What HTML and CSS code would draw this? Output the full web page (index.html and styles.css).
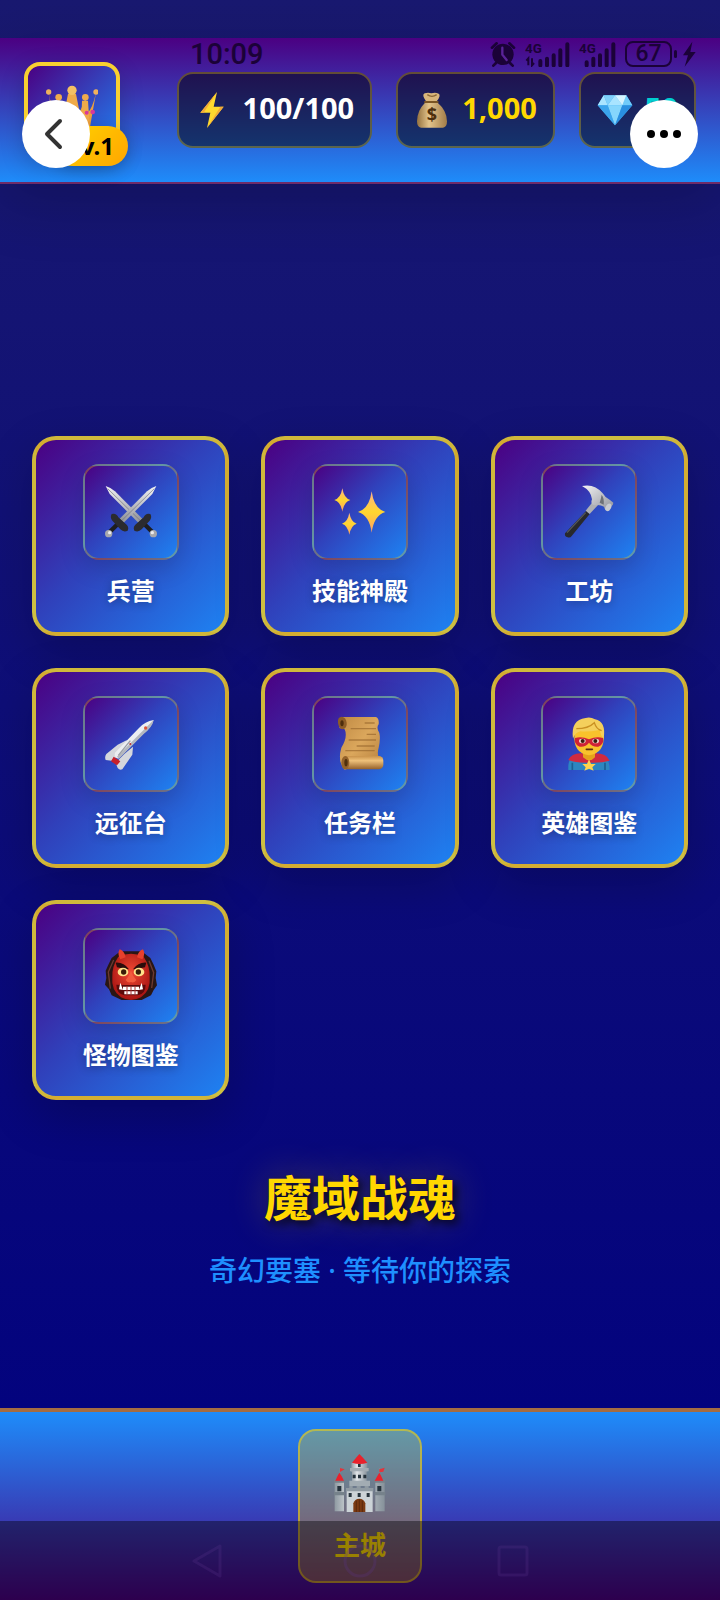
FILE: index.html
```html
<!DOCTYPE html>
<html lang="zh-CN">
<head>
  <meta charset="UTF-8" />
  <meta name="viewport" content="width=device-width, initial-scale=1.0"/>
  <title>魔域战魂</title>
  <link rel="stylesheet" href="styles.css">
</head>
<body>

  <!-- Shared gradients -->
  <svg class="defs" width="0" height="0" aria-hidden="true">
    <defs>
      <linearGradient id="steel" x1="0" y1="0" x2="1" y2="1"><stop offset="0" stop-color="#f4f4f6"/><stop offset="1" stop-color="#8e9098"/></linearGradient>
      <linearGradient id="spark" x1="0" y1="0" x2="0" y2="1"><stop offset="0" stop-color="#ffb28a"/><stop offset=".5" stop-color="#ffd62e"/><stop offset="1" stop-color="#ff9f6a"/></linearGradient>
      <linearGradient id="bag" x1="0" y1="0" x2="1" y2="0"><stop offset="0" stop-color="#94713f"/><stop offset=".4" stop-color="#e3c48c"/><stop offset="1" stop-color="#a27c48"/></linearGradient>
      <linearGradient id="paper" x1="0" y1="0" x2="1" y2="1"><stop offset="0" stop-color="#c08a44"/><stop offset=".5" stop-color="#dba75c"/><stop offset="1" stop-color="#b67f3d"/></linearGradient>
      <linearGradient id="roll" x1="0" y1="0" x2="0" y2="1"><stop offset="0" stop-color="#c9924a"/><stop offset=".35" stop-color="#efc17a"/><stop offset="1" stop-color="#94602a"/></linearGradient>
      <radialGradient id="face" cx=".5" cy=".4" r=".6"><stop offset="0" stop-color="#f04a34"/><stop offset="1" stop-color="#a91412"/></radialGradient>
      <linearGradient id="stone" x1="0" y1="0" x2="1" y2="0"><stop offset="0" stop-color="#8f9aa2"/><stop offset=".35" stop-color="#e2e6e8"/><stop offset="1" stop-color="#86919a"/></linearGradient>
    </defs>
  </svg>

  <!-- Phone status bar -->
  <div class="status-bar">
    <span class="time">10:09</span>
    <div class="status-icons">
      <svg width="26" height="26" viewBox="0 0 78 78">
        <circle cx="39" cy="40" r="32"/>
        <path d="M6 20 20 7M58 7 72 20M18 66l-8 8M60 66l8 8" stroke="currentColor" stroke-width="8" stroke-linecap="round"/>
        <path d="M37 20v21l13 16" fill="none" stroke="#5a2398" stroke-width="7" stroke-linecap="round"/>
      </svg>
      <svg width="45" height="26" viewBox="0 0 135 78">
        <text x="0" y="36" class="net">4G</text>
        <path d="M10 73V52l-6 7M21 52v21l6-7" fill="none" stroke="currentColor" stroke-width="6"/>
        <path d="M46 73V60M66 73V53M86 73V43M106 73V28M127 73V10" stroke="currentColor" stroke-width="12" stroke-linecap="round"/>
      </svg>
      <svg width="37" height="26" viewBox="0 0 111 78">
        <text x="0" y="36" class="net">4G</text>
        <path d="M23 73V64M43 73V53M63 73V43M83 73V28M103 73V10" stroke="currentColor" stroke-width="12" stroke-linecap="round"/>
      </svg>
      <span class="battery">67</span>
      <svg width="13" height="26" viewBox="0 0 39 78"><path d="M28 2 0 43h15L5 77 38 33H22z"/></svg>
    </div>
  </div>

  <header>
    <div class="avatar">
      <svg width="52" height="52" viewBox="0 0 156 156">
        <path d="M8 28 26 140q52 18 104 0L150 26q-10 46-26 62L118 44q-14 36-20 44L78 14 58 88 38 44 32 88Q14 66 8 28z" fill="#eda03c"/>
        <path d="M66 30h24l12 60H54zM108 50h18l4 60h-24z" fill="#efaa4a"/>
        <circle cx="8" cy="24" r="8" fill="#f0b25c"/><circle cx="150" cy="24" r="8" fill="#f0b25c"/>
        <circle cx="78" cy="19" r="14" fill="#f4c064"/><circle cx="38" cy="40" r="10" fill="#efab4c"/><circle cx="118" cy="40" r="10" fill="#efab4c"/>
        <circle cx="140" cy="84" r="7" fill="#d8389b"/><circle cx="122" cy="86" r="6" fill="#d8389b"/>
      </svg>
      <span class="level">Lv.1</span>
    </div>
    <div class="stats">
      <div class="stat">
        <svg width="36" height="36" viewBox="0 0 108 108"><path d="M66 0 16 62h30l-10 46 50-64H56z" fill="#ffd92e"/><path d="M66 0 16 62h10zM36 108l50-64H76z" fill="#f2a93a"/></svg>
        <span>100/100</span>
      </div>
      <div class="stat gold">
        <svg width="36" height="36" viewBox="0 0 108 108">
          <path d="M33 32Q9 56 9 88q0 18 12 19h66q12-1 12-19 0-32-28-56z" fill="url(#bag)"/>
          <path d="M36 28Q22 8 32 4q10-4 20 0 12-4 22 1 8 5-6 23z" fill="#d8b57b"/>
          <path d="M40 8q14 10 28 0" stroke="#8b6634" stroke-width="4" fill="none"/>
          <path d="M33 30h38" stroke="#7a5524" stroke-width="6" stroke-linecap="round"/>
          <text x="54" y="88" class="dollar">$</text>
        </svg>
        <span>1,000</span>
      </div>
      <div class="stat gem">
        <svg width="36" height="36" viewBox="0 0 108 108">
          <path d="M20 10h68l18 30-52 60L2 40z" fill="#49b4f2"/>
          <path d="M20 10 2 40h30zM54 10 32 40h44z" fill="#a9e4ff"/>
          <path d="M88 10 76 40h30z" fill="#70cbfa"/><path d="M20 10h34L32 40z" fill="#7fd0fb"/><path d="M54 10h34L76 40z" fill="#d8f5ff"/>
          <path d="M32 40h44L54 100z" fill="#86d6fc"/><path d="M2 40h30l22 60z" fill="#3ba4ec"/><path d="M76 40h30L54 100z" fill="#2a8fe0"/>
        </svg>
        <span>50</span>
      </div>
    </div>
  </header>

  <!-- Floating buttons over the page -->
  <button class="float-btn back" aria-label="返回">
    <svg width="68" height="68" viewBox="0 0 68 68"><path d="M38 21 25 34l13 13" fill="none" stroke="#333" stroke-width="4" stroke-linecap="round" stroke-linejoin="round"/></svg>
  </button>
  <button class="float-btn more" aria-label="更多">
    <svg width="68" height="68" viewBox="0 0 68 68"><circle cx="21" cy="34" r="4"/><circle cx="34" cy="34" r="4"/><circle cx="47" cy="34" r="4"/></svg>
  </button>

  <main>
    <div class="buildings">
      <button class="card">
        <span class="icon">
          <svg width="52" height="52" viewBox="0 0 156 156">
            <g id="sword">
              <path d="M2 0q14 4 28 16l82 82-12 12L14 24z" fill="url(#steel)"/>
              <path d="M8 8 106 104" stroke="#6f727a" stroke-width="2"/>
              <path d="M108 104l34 34" stroke="#1d1d20" stroke-width="13"/>
              <path d="M88 134q-6-12 8-22l20-18q6-14 20-10 6 10-2 20l-24 26q-10 10-22 4z" fill="#2b2b2f"/>
              <circle cx="145" cy="143" r="11" fill="#a8a8ac"/><circle cx="142" cy="140" r="5" fill="#ececee"/>
            </g>
            <use href="#sword" transform="matrix(-1 0 0 1 156 0)"/>
          </svg>
        </span>
        <span class="label">兵营</span>
      </button>
      <button class="card">
        <span class="icon">
          <svg width="52" height="52" viewBox="0 0 156 156" fill="url(#spark)">
            <path d="M113 16q7 52 41 62-34 10-41 62-7-52-41-62 34-10 41-62z"/>
            <path d="M25 7q5 30 24 35-19 5-24 35-5-30-24-35 19-5 24-35z"/>
            <path d="M46 80q5 28 22 33-17 5-22 33-5-28-22-33 17-5 22-33z"/>
          </svg>
        </span>
        <span class="label">技能神殿</span>
      </button>
      <button class="card">
        <span class="icon">
          <svg width="52" height="52" viewBox="0 0 156 156">
            <path d="M70 74 6 142q-2 10 8 12 8 2 12-4L80 84z" fill="#28292c"/>
            <path d="M68 80 12 140" stroke="#55575c" stroke-width="4"/>
            <path d="M68 74 92 44l14 12-26 28z" fill="#aeb0b4"/>
            <path d="M57 0q38-8 62 22 8 14 22 20l10 8q0 8-6 10-2 10-12 14-8-2-10-12-14-8-28-4-14-2-8-18Q84 14 57 0z" fill="url(#steel)"/>
            <path d="M116 26q8 10 6 30l-12-6q4-12 6-24z" fill="#6d7076"/>
            <ellipse cx="136" cy="64" rx="8" ry="12" fill="#c9cbd0" transform="rotate(30 136 64)"/>
          </svg>
        </span>
        <span class="label">工坊</span>
      </button>
      <button class="card">
        <span class="icon">
          <svg width="52" height="52" viewBox="0 0 156 156">
            <path d="M66 66 38 80 4 108q-6 8-2 18l18 2 26-20zM84 86 82 110 52 154q-8 4-14-4l-6-16 26-26z" fill="#d5d7dc"/>
            <path d="M26 116 46 130 36 142 18 130z" fill="#c7202a"/>
            <path d="M146 6q-26 4-44 24L30 104q-4 14 10 18l76-76q24-20 30-40z" fill="#eceef1"/>
            <path d="M146 6q-4 22-30 42l-74 74-6-6 76-76z" fill="#b3b6be"/>
            <path d="M76 68 40 112" stroke="#9a9da6" stroke-width="4"/>
            <circle cx="122" cy="30" r="5" fill="#d9533c"/><circle cx="76" cy="78" r="3" fill="#c03030"/>
          </svg>
        </span>
        <span class="label">远征台</span>
      </button>
      <button class="card">
        <span class="icon">
          <svg width="52" height="52" viewBox="0 0 156 156">
            <path d="M24-3h102q10 4 8 22-8 10 2 26 4 18-2 44-6 20 2 32l-104 34q-22-24-10-66Q42 56 32 34L16 30z" fill="url(#paper)"/>
            <path d="M24-4q-14 0-12 18 2 18 14 20 14-4 12-20-2-16-14-18z" fill="#8d5c26"/><ellipse cx="24" cy="16" rx="5" ry="9" fill="#4e2d0d"/>
            <path d="M92 15h30M98 49h28M68 84h54M50 32h76M44 66h82M34 98h88" stroke="#9a692f" stroke-width="4" opacity=".7"/>
            <rect x="24" y="114" width="124" height="40" rx="14" fill="url(#roll)"/>
            <ellipse cx="34" cy="134" rx="12" ry="20" fill="#94622a"/><ellipse cx="36" cy="134" rx="5" ry="11" fill="#50300e"/>
          </svg>
        </span>
        <span class="label">任务栏</span>
      </button>
      <button class="card">
        <span class="icon">
          <svg width="52" height="52" viewBox="0 0 156 156">
            <path d="M16 156q-2-34 16-42h90q18 8 18 42z" fill="#2c86c0"/>
            <path d="M28 156v-22M126 156v-22" stroke="#1b5f92" stroke-width="5"/>
            <path d="M16 126q10-22 42-20h40q32 0 42 22-26 8-62 6-36 2-62-8z" fill="#d02a40"/>
            <path d="M60 96h36v22q-16 18-36 0z" fill="#e5a21c"/>
            <path d="M34 48q-4 58 44 64 48-6 44-64Q110 14 78 14T34 48z" fill="#f9c22c"/>
            <path d="M30 62Q22 6 68 0q14-4 28 4 34 6 26 58-10-10-12-26-34 6-58 4-16 4-22 22z" fill="#f4cf5c"/>
            <path d="M40 32q36 0 54-18 6 20 22 24" stroke="#c99022" stroke-width="4" fill="none"/>
            <path d="M36 60q20-6 42 4 22-10 42-4 4 20-14 26-18 2-28-12-10 14-28 12-18-6-14-26z" fill="#cf2236"/>
            <ellipse cx="58" cy="69" rx="10" ry="7" fill="#e9d6d0"/><ellipse cx="98" cy="69" rx="10" ry="7" fill="#e9d6d0"/><circle cx="59" cy="69" r="6" fill="#3a1d10"/><circle cx="97" cy="69" r="6" fill="#3a1d10"/>
            <path d="M70 94h18" stroke="#5a2c12" stroke-width="5" stroke-linecap="round"/>
            <path d="M78 124l6 14h14l-10 10 4 10-14-6-14 6 4-10-10-10h14z" fill="#ffd44c"/>
          </svg>
        </span>
        <span class="label">英雄图鉴</span>
      </button>
      <button class="card">
        <span class="icon">
          <svg width="52" height="52" viewBox="0 0 156 156">
            <path d="M46 4h64l26 20 10 20 8 20-2 20 4 22-10 14-8 16-28 14H50l-30-14-8-18L0 104l4-20-2-22 8-18 10-20z" fill="#2a1614"/>
            <path d="M26 30 10 66l6 50M132 32l14 36-6 46" stroke="#6d3a30" stroke-width="4" fill="none"/>
            <path d="M40 20q38-18 76 0 20 30 18 62 4 40-26 60-30 16-60 0-30-20-26-60-2-32 18-62z" fill="url(#face)"/>
            <path d="M46 28Q36 12 44-2q14 4 18 24zM112 28q10-16 2-30-14 4-18 24z" fill="#e8402c"/>
            <path d="M32 38q24-2 40 20-18-2-36-6zM124 38q-24-2-40 20 18-2 36-6z" fill="#2b0d0b"/>
            <ellipse cx="54" cy="66" rx="16" ry="13" fill="#ffe28a"/><ellipse cx="102" cy="66" rx="16" ry="13" fill="#ffe28a"/><circle cx="56" cy="66" r="8" fill="#3a1c08"/><circle cx="100" cy="66" r="8" fill="#3a1c08"/>
            <path d="M78 62q-6 18-16 28 6 10 16 6 10 4 16-6-10-10-16-28z" fill="#f35b3e"/>
            <path d="M34 104q44 2 88 0 0 28-24 32H58q-24-6-24-32z" fill="#5c0a0a"/>
            <path d="M54 110h48v10H54zM58 124h40v9H58zM42 118l4-20 8 22zM114 118l-4-20-8 22z" fill="#fff"/>
            <path d="M66 108v26M78 108v26M90 108v26" stroke="#a33" stroke-width="3"/>
          </svg>
        </span>
        <span class="label">怪物图鉴</span>
      </button>
    </div>

    <section class="welcome">
      <h1>魔域战魂</h1>
      <p>奇幻要塞 · 等待你的探索</p>
    </section>
  </main>

  <footer>
    <button class="nav-item">
      <svg width="52" height="58" viewBox="0 0 156 174">
        <path d="M18 42v16M136 42v16" stroke="#8c8c94" stroke-width="2"/><path d="M18 42l14 4-14 8zM136 46l16-5-4 12-12 2z" fill="#e3343c"/>
        <path d="M52 26h48v28H52zM54 52h44v34H54z" fill="url(#stone)"/>
        <path d="M48 42h56v10H48zM46 80h62v16H46z" fill="#a2acb3"/>
        <path d="M54 26Q64 14 76 0q14 14 24 26-22 8-46 0z" fill="#e8222c"/>
        <path d="M38 104h78v70H38z" fill="#ccd3d7"/>
        <path d="M36 102h10v-6h10v6h12v-6h12v6h12v-6h12v6h14v10H36z" fill="#8f9aa2"/>
        <path d="M2 82h28v90H2zM124 82h28v90h-28z" fill="url(#stone)"/>
        <path d="M0 114h32v10H0zM122 114h32v10h-32zM0 76h30v10H0zM122 76h32v10h-32z" fill="#76828b"/>
        <path d="M4 80q6-14 12-24 8 10 14 24zM122 80q8-14 14-24 6 10 12 24z" fill="#e8222c"/>
        <path d="M72 30h8v9h-8zM56 62h9v11h-9zM72 62h9v11h-9zM88 62h9v11h-9zM10 96h12v16H10zM130 96h12v16h-12zM44 117h9v12h-9zM71 117h9v12h-9zM98 117h9v12h-9z" fill="#26333d"/>
        <path d="M58 174v-26q4-14 18-14t18 14v26z" fill="#7b3a12"/><path d="M76 136v38M67 140v34M85 140v34" stroke="#4d200a" stroke-width="2"/>
      </svg>
      <span>主城</span>
    </button>
  </footer>

  <!-- Phone navigation keys -->
  <div class="system-keys">
    <svg width="34" height="34" viewBox="0 0 34 34"><path d="M4 17 30 2v30z"/></svg>
    <svg width="34" height="34" viewBox="0 0 34 34"><circle cx="17" cy="17" r="15"/></svg>
    <svg width="34" height="34" viewBox="0 0 34 34"><rect x="3" y="3" width="28" height="28" rx="2"/></svg>
  </div>

</body>
</html>
```

FILE: styles.css
```css
* {
  box-sizing: border-box;
}

body {
  margin: 0;
  padding-top: 38px;
  min-height: 100vh;
  display: flex;
  flex-direction: column;
  font-family: "Noto Sans", "Noto Sans CJK SC", sans-serif;
  color: white;
  background: linear-gradient(180deg, #191970, #000080);
}

button {
  font-family: inherit;
  color: inherit;
  border: none;
  padding: 0;
  cursor: pointer;
}

svg {
  display: block;
  flex: none;
}

.defs {
  position: absolute;
}

/* status bar */
.status-bar {
  position: absolute;
  top: 38px;
  left: 0;
  right: 0;
  z-index: 3;
  height: 32px;
  padding: 0 24px 0 190px;
  display: flex;
  justify-content: space-between;
  align-items: center;
  color: #1b0238;
  fill: #1b0238;
}

.time {
  font-family: Roboto, sans-serif;
  font-size: 29px;
  font-weight: 500;
  line-height: 32px;
}

.status-icons {
  display: flex;
  align-items: center;
  gap: 9px;
}

.net {
  font: bold 40px Roboto, sans-serif;
}

.battery {
  position: relative;
  width: 47px;
  height: 26px;
  margin-right: 2px;
  border: 2px solid #1b0238;
  border-radius: 8px;
  font: 500 23px/22px Roboto, sans-serif;
  text-align: center;
}

.battery::after {
  content: "";
  position: absolute;
  right: -7px;
  top: 7px;
  width: 3px;
  height: 8px;
  border-radius: 2px;
  background: #1b0238;
}

/* header */
header {
  display: flex;
  justify-content: space-between;
  align-items: center;
  padding: 24px;
  background: linear-gradient(180deg, #4b0082, #1e8cfa);
  border-bottom: 2px solid rgba(255, 215, 0, 0.2);
  box-shadow: 0 16px 64px rgba(0, 0, 0, 0.2);
}

.avatar {
  position: relative;
  width: 96px;
  height: 96px;
  display: flex;
  justify-content: center;
  align-items: center;
  border: 4px solid #f8d030;
  border-radius: 16px;
  background: linear-gradient(135deg, #4b0082, #1e84f5);
  box-shadow: 0 8px 24px rgba(0, 0, 0, 0.2);
}

.level {
  position: absolute;
  right: -12px;
  bottom: -12px;
  padding: 0 14px;
  border-radius: 20px;
  background: linear-gradient(135deg, #ffd700, #ffa500);
  color: black;
  font-size: 24px;
  font-weight: bold;
  line-height: 40px;
  box-shadow: 0 4px 16px rgba(0, 0, 0, 0.2);
}

.stats {
  display: flex;
  gap: 24px;
}

.stat {
  display: flex;
  align-items: center;
  gap: 12px;
  padding: 18px 16px;
  border: 2px solid rgba(255, 215, 0, 0.3);
  border-radius: 16px;
  background: rgba(0, 0, 0, 0.5);
  font-size: 29px;
  font-weight: bold;
  line-height: 36px;
}

.stat span {
  padding-bottom: 4px;
  line-height: 32px;
}

.gold {
  color: #ffd700;
}

.gem {
  color: #00ced1;
}

.dollar {
  font: bold 54px "Noto Sans", sans-serif;
  fill: #4d2f0c;
  text-anchor: middle;
}

/* floating buttons */
.float-btn {
  position: absolute;
  top: 100px;
  z-index: 4;
  width: 68px;
  height: 68px;
  border-radius: 50%;
  background: white;
}

.back {
  left: 22px;
}

.more {
  right: 22px;
}

/* buildings */
main {
  flex: 1;
  padding: 252px 32px 32px;
}

.buildings {
  display: grid;
  grid-template-columns: repeat(3, 1fr);
  gap: 32px;
}

.card {
  display: flex;
  flex-direction: column;
  align-items: center;
  gap: 16px;
  padding: 24px 0;
  border: 4px solid rgba(240, 205, 32, 0.84);
  border-radius: 24px;
  background: linear-gradient(135deg, #4b0082, #3040ba 45%, #1e82f2);
  box-shadow: 0 16px 48px rgba(0, 0, 0, 0.2);
}

.icon {
  width: 96px;
  height: 96px;
  display: flex;
  justify-content: center;
  align-items: center;
  border: 2px solid rgba(255, 215, 0, 0.3);
  border-radius: 16px;
  background: linear-gradient(135deg, #4b0082, #3042bc 45%, #1e82f2);
  box-shadow: 0 8px 24px rgba(0, 0, 0, 0.15);
}

.icon svg {
  overflow: visible;
}

.label {
  padding-bottom: 2px;
  font-size: 24px;
  font-weight: bold;
  line-height: 30px;
  text-shadow: 0 2px 8px rgba(0, 0, 0, 0.3);
}

/* title */
.welcome {
  padding-top: 64px;
  text-align: center;
}

h1 {
  margin: 0 0 16px;
  color: #ffd700;
  font-size: 48px;
  line-height: 68px;
  text-shadow: 4px 4px 8px rgba(0, 0, 0, 0.8), 0 0 40px rgba(255, 215, 0, 0.3);
}

.welcome p {
  margin: 0;
  color: #1e90ff;
  font-size: 28px;
  font-weight: 500;
  line-height: 44px;
}

/* bottom navigation */
footer {
  display: flex;
  justify-content: center;
  padding: 17px;
  border-top: 4px solid rgba(255, 215, 0, 0.5);
  background: linear-gradient(180deg, #1e8cfa, #4b0082);
}

.nav-item {
  display: flex;
  flex-direction: column;
  align-items: center;
  gap: 16px;
  padding: 23px 34px 19px;
  border: 2px solid rgba(255, 215, 0, 0.5);
  border-radius: 18px;
  background: rgba(255, 215, 0, 0.3);
  color: #ffd700;
  font-size: 26px;
  font-weight: bold;
  line-height: 34px;
}

.system-keys {
  position: absolute;
  left: 0;
  right: 0;
  bottom: 0;
  height: 79px;
  display: flex;
  justify-content: center;
  align-items: center;
  gap: 119px;
  background: rgba(0, 0, 0, 0.4);
  fill: none;
  stroke: rgba(90, 50, 140, 0.25);
  stroke-width: 3px;
  stroke-linejoin: round;
  pointer-events: none;
}
```
